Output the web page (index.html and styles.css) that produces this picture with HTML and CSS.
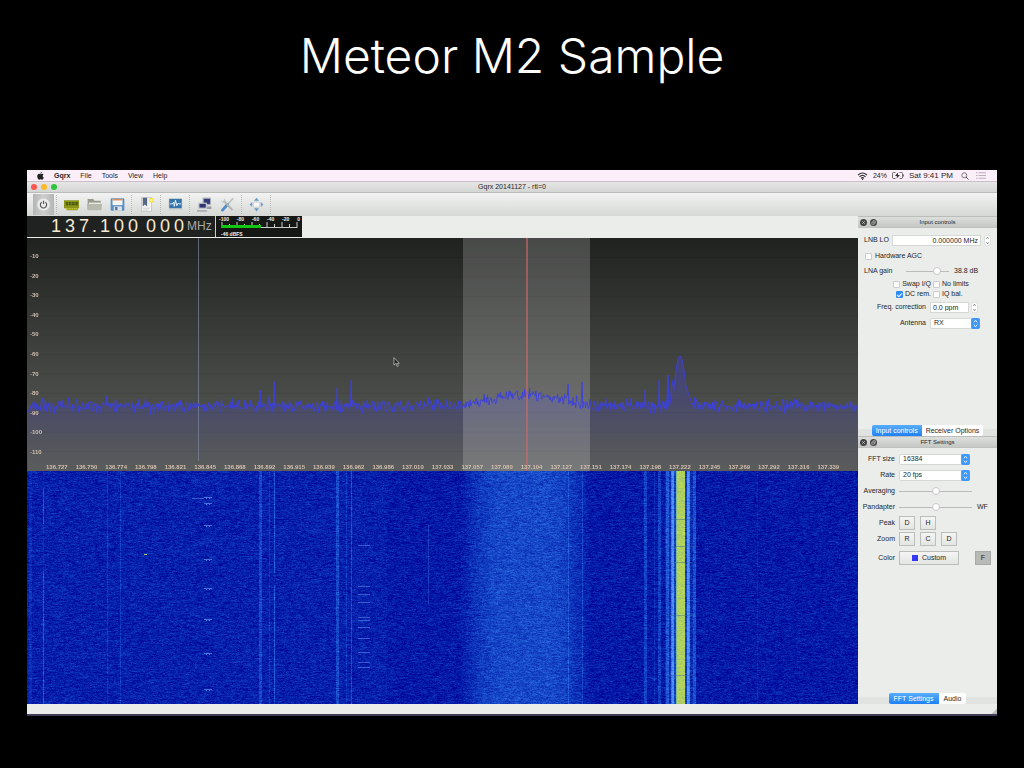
FILE: index.html
```html
<!DOCTYPE html>
<html lang="en">
<head>
<meta charset="utf-8">
<title>Meteor M2 Sample</title>
<link rel="stylesheet" href="styles.css">
</head>
<body>
<main class="slide">
  <h1 class="slide-title">Meteor M2 Sample</h1>
  <section class="window" aria-label="Gqrx">
    <nav class="menubar">
      <svg class="apple" viewBox="0 0 16 18"><path d="M11 0c0 2-1.500 3.800-3.300 3.800C7.500 2 9.200.200 11 0zM8 5c1 0 1.800-1 3.500-1 1.500 0 2.700.800 3.400 1.800-2.900 1.800-2.400 5.700.600 6.900-.8 2-2.200 4.800-4 4.800-1.200 0-1.700-.8-3.200-.8s-2 .8-3.200.8C2.800 17.500.500 13 .500 9.500.500 6 2.700 4 5 4c1.300 0 2.200 1 3 1z"/></svg>
      <a class="app-name" href="#">Gqrx</a><a href="#">File</a><a href="#">Tools</a><a href="#">View</a><a href="#">Help</a>
      <span class="menu-status">
        <svg class="wifi" viewBox="0 0 20 16"><g fill="none" stroke="#333" stroke-width="2.200"><path d="M1 6q9-8 18 0M4 9.500q6-5.500 12 0M7 12.500q3-2.500 6 0"/></g><circle cx="10" cy="14.500" r="1.500" fill="#333"/></svg>
        <span>24%</span>
        <svg class="battery" viewBox="0 0 24 14"><path d="M7 1H3Q1 1 1 3v8q0 2 2 2h4M15 1h4q2 0 2 2v8q0 2-2 2h-4M23 5v4" fill="none" stroke="#444" stroke-width="1.500"/><path d="M12 1 6 8h4l-1 5 7-7h-4z" fill="#333"/></svg>
        <span class="clock">Sat 9:41 PM</span>
        <svg class="search" viewBox="0 0 16 16"><circle cx="6.500" cy="6.500" r="5" fill="none" stroke="#555" stroke-width="1.500"/><path d="m10 10 5 5" stroke="#555" stroke-width="2"/></svg>
        <svg class="list" viewBox="0 0 20 14"><path d="M0 1.500h3M5 1.500h15M0 7h3M5 7h15M0 12.500h3M5 12.500h15" stroke="#bbb1ba" stroke-width="2"/></svg>
      </span>
    </nav>
    <header class="titlebar">
      <span class="lights"><i class="light red"></i><i class="light amber"></i><i class="light green"></i></span>
      <span>Gqrx 20141127 - rtl=0</span>
    </header>
    <div class="toolbar">
      <button class="tool power" aria-label="Power"><svg viewBox="0 0 24 24"><circle cx="12" cy="12" r="10.500" fill="#e9e9e8" stroke="#c3c5c3"/><path d="M9 8.500a5 5 0 1 0 6 0M12 6v5" fill="none" stroke="#555" stroke-width="1.800"/></svg></button>
      <i class="sep"></i>
      <button class="tool" aria-label="Hardware"><svg viewBox="0 0 24 24"><path d="M0 5h24v13h-2v3H4v-3H0z" fill="#8a9419"/><path d="M3 8h4v5H3zM8 8h4v5H8zM13 8h4v5h-4zM18 8h4v5h-4z" fill="#4d5610"/><path d="M4 19h17" stroke="#d3d33b" stroke-width="2" stroke-dasharray="2 1"/><path d="M3 10h18" stroke="#aab33b" stroke-dasharray="1 2"/></svg></button>
      <button class="tool" aria-label="Open"><svg viewBox="0 0 24 24"><path d="M1 3h9l2 3h10v14H1z" fill="#999b8e"/><path d="M3 9h19v3H3z" fill="#e9ebe5"/><path d="M0 11h24l-1 10H1z" fill="#b7b9ac"/></svg></button>
      <button class="tool" aria-label="Save"><svg viewBox="0 0 24 24"><rect x="1" y="2" width="22" height="20" rx="2" fill="#588fc5"/><path d="M4 3h16v10H4z" fill="#f4f4f1"/><path d="M4 3h16v2.500H4z" fill="#d78e5d"/><path d="M6 15h13v7H6z" fill="#e1e4e6"/><path d="M8 16h4v5H8z" fill="#527ca5"/></svg></button>
      <i class="sep"></i>
      <button class="tool" aria-label="Bookmarks"><svg viewBox="0 0 24 24"><path d="M4 1h16v22H4z" fill="#f3f3f1" stroke="#b5b8b8"/><path d="M6 1h7v14l-3.500-3L6 15z" fill="#526a85"/><path d="M6 18h11M6 21h9" stroke="#bdc4c9"/><circle cx="20" cy="5" r="4" fill="#f2e23b"/><circle cx="20" cy="5" r="2" fill="#fff89b"/></svg></button>
      <i class="sep"></i>
      <button class="tool" aria-label="Spectrum"><svg viewBox="0 0 24 24"><rect x="1" y="2" width="22" height="19" rx="2" fill="#d2d5d4"/><path d="M2 3h20v15H2z" fill="#3575ad"/><path d="M3 11h4l2-3 1 7 2-10 2 9 2-4 1 1h4" fill="none" stroke="#e6f4ff" stroke-width="1.600"/></svg></button>
      <i class="sep"></i>
      <button class="tool" aria-label="Remote control"><svg viewBox="0 0 24 24"><path d="M9 1h13v12H9z" fill="#a4a8b4"/><path d="M11 3h10v8H11z" fill="#353a79"/><path d="M2 9h14v10H2z" fill="#c2c4cb"/><path d="M4 11h10v6H4z" fill="#303477"/><path d="M0 21h15l2 2H0zM16 15h7v4h-7z" fill="#9a9ca6"/></svg></button>
      <button class="tool" aria-label="Settings"><svg viewBox="0 0 24 24"><path d="m21 2-9 10" stroke="#b9bfc0" stroke-width="2.500"/><path d="m12 12-8 9" stroke="#4f8dc5" stroke-width="4.500" stroke-linecap="round"/><path d="m6 6 14 15" stroke="#aeb4b5" stroke-width="3"/><path d="M2 3q-1 7 5 6 3-3 0-7l-1 4-3 1z" fill="#c0c5c5"/></svg></button>
      <i class="sep"></i>
      <button class="tool" aria-label="Full screen"><svg viewBox="0 0 24 24"><rect x="7" y="8" width="10" height="8" rx="1" fill="#f9faf9" stroke="#b4bbc0"/><path d="m12 1 4 5H8zM12 23l4-5H8zM1 12l4-4v8zM23 12l-4-4v8z" fill="#659bc9"/></svg></button>
      <i class="sep"></i>
    </div>
    <div class="workspace">
      <div class="receiver">
        <div class="readout">
          <div class="frequency"><span>1</span><span>3</span><span>7</span><span class="dot">.</span><span>1</span><span>0</span><span>0</span><span class="group">0</span><span>0</span><span>0</span><span class="unit">MHz</span></div>
          <div class="meter">
            <div class="meter-scale"><span>-100</span><span>-80</span><span>-60</span><span>-40</span><span>-20</span><span>0</span></div>
            <svg class="meter-bar" viewBox="0 0 77 7" preserveAspectRatio="none"><path d="M1 0v6M8.500 2v4M16 0v6M23.500 2v4M31 0v6M38.500 2v4M46 0v6M53.500 2v4M61 0v6M68.500 2v4M76 0v6M1 5.500h75" fill="none" stroke="#ccc"/><path d="M1 3h39v3H1z" fill="#15c515"/></svg>
            <span class="meter-value">-46 dBFS</span>
          </div>
        </div>
        <div class="plot">
          <canvas id="spectrum"></canvas>
          <div class="levels"><span>-10</span><span>-20</span><span>-30</span><span>-40</span><span>-50</span><span>-60</span><span>-70</span><span>-80</span><span>-90</span><span>-100</span><span>-110</span></div>
          <div class="freqs"><span>136.727</span><span>136.750</span><span>136.774</span><span>136.798</span><span>136.821</span><span>136.845</span><span>136.868</span><span>136.892</span><span>136.915</span><span>136.939</span><span>136.962</span><span>136.986</span><span>137.010</span><span>137.033</span><span>137.057</span><span>137.080</span><span>137.104</span><span>137.127</span><span>137.151</span><span>137.174</span><span>137.198</span><span>137.222</span><span>137.245</span><span>137.269</span><span>137.292</span><span>137.316</span><span>137.339</span></div>
          <svg class="pointer" viewBox="0 0 10 16"><path d="M1 1v12l3-3 2 5 2-1-2-4h3.500z" fill="#222" stroke="#ddd"/></svg>
        </div>
        <div class="waterfall"><canvas id="waterfall"></canvas></div>
      </div>
      <aside class="docks">
        <section class="dock dock-input">
          <h2 class="dock-title"><button class="dock-btn" aria-label="Close"><svg viewBox="0 0 14 14"><circle cx="7" cy="7" r="7"/><path d="m4 4 6 6m0-6-6 6"/></svg></button><button class="dock-btn" aria-label="Float"><svg viewBox="0 0 14 14"><circle cx="7" cy="7" r="7"/><path d="M3.500 6.500h5v4h-5zM6 6V3.500h4.500v5H9"/></svg></button><span>Input controls</span></h2>
          <div class="dock-body">
            <div class="row lnb"><label for="lnb">LNB LO</label><input id="lnb" type="text" value="0.000000 MHz"><svg class="stepper" viewBox="0 0 12 20"><use href="#step"/></svg></div>
            <div class="row agc"><input id="agc" type="checkbox"><label for="agc">Hardware AGC</label></div>
            <div class="row gain"><label for="gain">LNA gain</label><input id="gain" type="range" value="78"><output for="gain">38.8 dB</output></div>
            <div class="checks">
              <span><input id="swap" type="checkbox"><label for="swap">Swap I/Q</label></span><span><input id="nolim" type="checkbox"><label for="nolim">No limits</label></span>
              <span><input id="dc" type="checkbox" checked><label for="dc">DC rem.</label></span><span><input id="iq" type="checkbox"><label for="iq">IQ bal.</label></span>
            </div>
            <div class="row tune ppm"><label for="ppm">Freq. correction</label><input id="ppm" type="text" value="0.0 ppm"><svg class="stepper" viewBox="0 0 12 20"><use href="#step"/></svg></div>
            <div class="row tune antenna"><label for="ant">Antenna</label><span class="combo"><select id="ant"><option>RX</option></select><svg viewBox="0 0 16 20"><use href="#arrows"/></svg></span></div>
          </div>
          <div class="tabs"><button class="tab active">Input controls</button><button class="tab">Receiver Options</button></div>
        </section>
        <section class="dock dock-fft">
          <h2 class="dock-title"><button class="dock-btn" aria-label="Close"><svg viewBox="0 0 14 14"><circle cx="7" cy="7" r="7"/><path d="m4 4 6 6m0-6-6 6"/></svg></button><button class="dock-btn" aria-label="Float"><svg viewBox="0 0 14 14"><circle cx="7" cy="7" r="7"/><path d="M3.500 6.500h5v4h-5zM6 6V3.500h4.500v5H9"/></svg></button><span>FFT Settings</span></h2>
          <div class="dock-body">
            <div class="row field"><label for="fft">FFT size</label><span class="combo wide"><select id="fft"><option>16384</option></select><svg viewBox="0 0 16 20"><use href="#arrows"/></svg></span></div>
            <div class="row field"><label for="rate">Rate</label><span class="combo wide"><select id="rate"><option>20 fps</option></select><svg viewBox="0 0 16 20"><use href="#arrows"/></svg></span></div>
            <div class="row field"><label for="avg">Averaging</label><input id="avg" type="range" value="50"></div>
            <div class="row field"><label for="pan">Pandapter</label><input id="pan" type="range" value="50"><span>WF</span></div>
            <div class="row field"><span class="caption">Peak</span><button class="key">D</button><button class="key">H</button></div>
            <div class="row field"><span class="caption">Zoom</span><button class="key">R</button><button class="key">C</button><button class="key">D</button></div>
            <div class="row field color-row"><span class="caption">Color</span><button class="key custom"><i class="swatch"></i>Custom</button><button class="key pressed">F</button></div>
          </div>
          <div class="tabs"><button class="tab active">FFT Settings</button><button class="tab">Audio</button></div>
        </section>
      </aside>
    </div>
    <footer class="statusbar"><svg viewBox="0 0 10 10"><path d="M10 1v9H1z" fill="#bcbebc"/></svg></footer>
  </section>
</main>
<svg class="defs" aria-hidden="true">
  <defs>
    <g id="step"><rect x=".5" y=".5" width="11" height="19" rx="4" fill="#fff" stroke="#ccc"/><path d="m4 7 2-3 2 3M4 13l2 3 2-3" fill="none" stroke="#555" stroke-width="1.200"/></g>
    <g id="arrows"><rect width="16" height="20" rx="3" fill="#3f97f8"/><path d="m5 8 3-4 3 4M5 12l3 4 3-4" fill="none" stroke="#fff" stroke-width="1.500"/></g>
  </defs>
</svg>
<script src="plots.js"></script>
</body>
</html>
```

FILE: styles.css
```css
* { box-sizing: border-box; }
body { margin: 0; background: #000; font-family: "Liberation Sans", Arial, sans-serif; font-size: 7px; line-height: 8px; color: #262626; }
button, input, select { font: inherit; color: inherit; margin: 0; padding: 0; border: 0; border-radius: 0; background: none; }
svg { display: block; }
a { color: inherit; text-decoration: none; }
.defs { position: absolute; width: 0; height: 0; }
.slide { display: flex; flex-direction: column; min-height: 100vh; padding: 0 27px 52px; }
.slide-title { margin: 0; height: 170px; padding-top: 25px; text-align: center; color: #fff; font-family: Inter, "Liberation Sans", sans-serif; font-weight: 300; font-size: 48px; line-height: 62px; }
.window { flex: 1; display: flex; flex-direction: column; background: #ebedeb; border-bottom: 2px solid #443b58; }

.menubar { display: flex; align-items: center; gap: 10px; height: 12px; padding: 0 11px 0 10px; background: #fceffa; border-bottom: 1px solid #c9bfc8; }
.apple { width: 7px; height: 8px; fill: #222; }
.app-name { font-weight: 700; }
.menu-status { display: flex; align-items: center; gap: 5px; margin-left: auto; }
.wifi { width: 11px; height: 8px; }
.battery { width: 12px; height: 7px; }
.clock { font-size: 8px; padding-right: 3px; }
.search { width: 8px; height: 8px; }
.list { width: 10px; height: 7px; margin-left: 2px; }

.titlebar { display: grid; grid-template-columns: 1fr auto 1fr; align-items: center; height: 11px; padding: 0 4px; background: linear-gradient(#e5e6e5, #d4d6d4); border-bottom: 1px solid #babcba; }
.lights { display: flex; gap: 4px; }
.light { width: 6px; height: 6px; border-radius: 50%; }
.red { background: #fc5650; }
.amber { background: #fdb825; }
.green { background: #2bc43b; }

.toolbar { display: flex; align-items: center; height: 23px; padding-left: 6px; background: linear-gradient(#f2f3f2, #d5d8d5); }
.tool { display: grid; place-items: center; width: 23px; height: 21px; }
.tool svg { width: 15px; height: 15px; }
.power { width: 21px; background: linear-gradient(90deg, #b3b6b4, #cdcfcd, #b3b6b4); }
.sep { width: 1px; height: 19px; margin: 0 3px 0 2px; border-left: 1px dotted #b5b8b5; }

.workspace { flex: 1; display: flex; }
.receiver { flex: 1; min-width: 0; display: flex; flex-direction: column; }
.readout { display: flex; height: 22px; padding-bottom: 1px; }
.frequency { display: flex; align-items: center; width: 188px; padding-left: 22px; background: #1f2221; color: #f7e9cf; font-size: 18px; line-height: 21px; }
.frequency span { width: 14px; text-align: center; }
.frequency .dot { width: 7px; }
.frequency .group { margin-left: 4px; }
.frequency .unit { width: auto; margin-left: 1px; font-size: 12px; color: #a9aba9; }
.meter { width: 87px; padding: 0 2px 0 3px; background: #161816; border-left: 1px solid #ccc; color: #eee; font-size: 5px; line-height: 6px; font-weight: 700; }
.meter-scale { display: flex; justify-content: space-between; }
.meter-bar { width: 77px; height: 7px; margin-left: 2px; }
.meter-value { display: block; margin: 2px 0 0 2px; }
.plot { position: relative; flex: 1; display: flex; flex-direction: column; justify-content: space-between; min-height: 120px; color: #d3bfae; font-size: 6px; line-height: 7px; font-weight: 700; }
.plot canvas, .waterfall canvas { position: absolute; inset: 0; width: 100%; height: 100%; }
.levels { position: relative; flex: 1; display: flex; flex-direction: column; padding: 9px 0 2px 3px; }
.levels span { flex: 1; display: flex; align-items: center; }
.freqs { position: relative; display: flex; padding: 0 15px; }
.freqs span { flex: 1 1 0; min-width: 0; text-align: center; }
.pointer { position: absolute; left: 44%; top: 51%; width: 7px; height: 10px; }
.waterfall { position: relative; flex: 1; min-height: 120px; background: #0717a6; }

.docks { width: 139px; display: flex; flex-direction: column; }
.dock { display: flex; flex-direction: column; }
.dock-input { flex: 220 1 0; }
.dock-fft { flex: 268 1 0; }
.dock-title { display: flex; align-items: center; gap: 3px; height: 12px; margin: 0; padding: 0 2px; font-size: 6px; font-weight: 400; background: linear-gradient(#dddfdd, #c5c7c5); border-top: 1px solid #bbbdbb; border-bottom: 1px solid #bfc1bf; }
.dock-title > span { flex: 1; text-align: center; }
.dock-btn svg { width: 7px; height: 7px; fill: #444; stroke: #eee; stroke-width: 1; }
.dock-btn circle { stroke: none; }
.dock-body { flex: 1; padding: 3px 6px 0; }
.row { display: flex; align-items: center; }
input[type="text"] { min-width: 0; height: 11px; padding: 0 2px; background: #fff; border: 1px solid #d6d8d6; }
.stepper { width: 7px; height: 11px; }
input[type="checkbox"] { appearance: none; width: 7px; height: 7px; background: #fff; border: 1px solid #ccc; border-radius: 1px; flex: none; }
input[type="checkbox"]:checked { background: #2d8bf5; border-color: #2d8bf5; }
input[type="checkbox"]:checked::after { content: ""; display: block; width: 2px; height: 4px; margin-left: 1px; border: solid #fff; border-width: 0 1px 1px 0; transform: rotate(45deg); }
input[type="range"] { appearance: none; height: 10px; background: linear-gradient(#bbb, #bbb) center / 100% 1px no-repeat; }
input[type="range"]::-webkit-slider-thumb { appearance: none; width: 8px; height: 8px; border: 1px solid #c8c8c8; border-radius: 50%; background: #fff; }

.lnb { height: 18px; gap: 3px; }
.lnb input { flex: 1; text-align: right; }
.agc { height: 14px; gap: 3px; padding-left: 1px; }
.gain { height: 16px; }
.gain label { width: 42px; }
.gain input { width: 43px; }
.gain output { margin-left: 5px; }
.checks { display: grid; grid-template-columns: 67px auto; column-gap: 2px; }
.checks span { display: flex; align-items: center; gap: 2px; height: 10px; }
.checks span:nth-child(odd) { justify-content: flex-end; }
.tune { height: 16px; }
.tune label { width: 62px; margin-right: 4px; text-align: right; }
.ppm input { width: 39px; margin-right: 2px; }
.combo { display: flex; width: 50px; height: 11px; background: #fff; border: 1px solid #d6d8d6; border-radius: 2px; }
.combo select { flex: 1; min-width: 0; appearance: none; padding-left: 3px; }
.combo svg { width: 9px; height: 11px; margin: -1px -1px 0 0; }
.wide { width: 71px; }

.dock-fft .dock-body { padding: 3px 0 0; }
.field { height: 16px; }
.field > label, .caption { width: 37px; margin-right: 4px; text-align: right; }
.field > input { width: 73px; margin-right: 5px; }
.key { width: 16px; height: 14px; margin-right: 5px; border: 1px solid #bcbebc; background: linear-gradient(#f4f5f4, #e3e5e3); }
.color-row { height: 22px; }
.custom { display: flex; align-items: center; justify-content: center; gap: 4px; width: 60px; margin-right: 16px; }
.swatch { width: 6px; height: 6px; background: #3538ef; }
.pressed { background: #b8bab8; border-color: #a8aaa8; }
.tabs { display: flex; justify-content: center; height: 11px; background: linear-gradient(#ebedeb 40%, #e1e3e1 40%); }
.tab { height: 11px; padding: 0 5px; background: #fff; border-radius: 0 2px 2px 0; }
.tab.active { background: linear-gradient(#59adf9, #1e81f5); color: #fff; border-radius: 2px 0 0 2px; }
.dock-input .tab { padding: 0 4px; }
.statusbar { display: flex; justify-content: flex-end; align-items: flex-end; height: 10px; }
.statusbar svg { width: 6px; height: 6px; }
```

FILE: plots.js
```js
(function () {
  var seed = 20141127;
  function rnd() {
    seed = (seed * 1664525 + 1013904223) >>> 0;
    return seed / 4294967296;
  }
  function prepare(id) {
    var c = document.getElementById(id);
    c.width = c.clientWidth;
    c.height = c.clientHeight;
    return c;
  }
  // Both plots are modelled on an 831 x 233 grid.
  var GW = 831, GH = 233;

  function drawSpectrum() {
    var c = prepare("spectrum"), g = c.getContext("2d");
    g.scale(c.width / GW, c.height / GH);
    var bg = g.createLinearGradient(0, 0, 0, GH);
    bg.addColorStop(0, "#202220");
    bg.addColorStop(0.5, "#40423f");
    bg.addColorStop(1, "#5b5d5b");
    g.fillStyle = bg;
    g.fillRect(0, 0, GW, GH);
    g.fillStyle = "rgba(0,0,0,.06)";
    for (var k = 0; k < 11; k++) g.fillRect(0, 19 + k * 19.4, GW, 1);

    var spikes = [[15, 160], [80, 158], [233, 152], [242, 158], [247, 143], [310, 150], [324, 142],
      [401, 159], [541, 146], [555, 144], [618, 152], [632, 142], [641, 137], [668, 159]];
    var pts = [];
    for (var x = 0; x <= GW; x += 0.7) {
      var y = 168;
      if (x > 437 && x < 562) y -= 11 * Math.sin((x - 437) / 125 * Math.PI);
      y += (rnd() + rnd() + rnd() - 1.5) * 6;
      var d = Math.abs(x - 653);
      if (d >= 6 && d < 22) y -= rnd() * (22 - d) * 0.6;
      if (d < 8) y = Math.min(y, 118 + d * d * 0.9);
      if (Math.abs(x - 645.5) < 1.5) y = 142 + Math.abs(x - 645.5) * 8;
      if (x > 659 && x < 664) y = Math.min(y, 148 + (x - 659) * 3);
      spikes.forEach(function (s) { if (Math.abs(x - s[0]) < 0.5) y = s[1]; });
      pts.push([x, y]);
    }
    g.beginPath();
    g.moveTo(0, GH);
    pts.forEach(function (p) { g.lineTo(p[0], p[1]); });
    g.lineTo(GW, GH);
    var fill = g.createLinearGradient(0, 117, 0, GH);
    fill.addColorStop(0, "rgba(65,65,190,.5)");
    fill.addColorStop(0.45, "rgba(70,70,160,.35)");
    fill.addColorStop(1, "rgba(80,80,110,.05)");
    g.fillStyle = fill;
    g.fill();
    g.fillStyle = "rgba(255,255,255,.18)";
    g.fillRect(436, 0, 127, GH);
    g.fillStyle = "rgba(125,140,165,.65)";
    g.fillRect(171, 0, 1, 223);
    g.beginPath();
    pts.forEach(function (p) { g.lineTo(p[0], p[1]); });
    g.strokeStyle = "rgba(60,64,224,.9)";
    g.lineWidth = 1;
    g.stroke();
    g.fillStyle = "rgba(205,105,105,.6)";
    g.fillRect(499, 0, 2, GH);
    g.fillStyle = "#4848a5";
    g.fillRect(0, 167, 1, 66);
    g.fillRect(830, 167, 1, 66);
  }

  function drawWaterfall() {
    var c = prepare("waterfall"), g = c.getContext("2d");
    var w = c.width, h = c.height, img = g.createImageData(w, h), boost = [];
    // [x, half-width, strength]
    var lines = [[16, 1, 0.34], [3, 2, 0.1], [80, 1, 0.15], [93, 1, 0.18], [233, 1.2, 0.24], [242, 1, 0.16],
      [247, 1, 0.36], [310, 1.2, 0.27], [319, 1, 0.17], [324, 1, 0.28], [541, 1, 0.18], [555, 1, 0.2],
      [618, 1.2, 0.26], [627, 1, 0.14], [632, 1.2, 0.25], [640, 1.4, 0.26], [645, 1.7, 0.46], [661, 1.8, 0.5],
      [667, 1.2, 0.22], [730, 1, 0.08], [653, 9, 0.14], [653, 16, 0.12]];
    for (var x = 0; x < w; x++) {
      var gx = x * GW / w, b = 0.22;
      if (gx < 360) b += 0.04;
      var t = Math.abs(gx - 498) / 66;
      if (t < 1) b += 0.29 * Math.sin(Math.min(1, (1 - t) * 1.5) * Math.PI / 2);
      lines.forEach(function (l) {
        if (Math.abs(gx - l[0]) < l[1]) b += l[2];
      });
      boost.push(b);
    }
    for (var y = 0; y < h; y++) {
      var gy = y * GH / h, carry = 0;
      for (x = 0; x < w; x++) {
        gx = x * GW / w;
        carry = carry * 0.45 + (rnd() + rnd() - 1) * 0.17;
        var base = boost[x];
        if (Math.abs(gx - 16) < 1 && ((gy > 52 && gy < 100) || gy < 17)) base -= 0.26;
        if (Math.abs(gx - 247) < 1 && gy > 101 && gy < 115) base -= 0.3;
        var v = Math.max(0, Math.min(1, base + carry));
        var r = v * v * 85, gr = v * 160 - 10, bl = 142 + v * 112;
        if (Math.abs(gx - 653.3) < 4.6) {
          r = 175 + carry * 110; gr = 208 + carry * 80; bl = 95 - carry * 110;
          if (Math.abs(gx - 653.3) > 3.8) { r = 125; gr = 185; bl = 145; }
        }
        var i = (y * w + x) * 4;
        img.data[i] = r; img.data[i + 1] = gr; img.data[i + 2] = bl; img.data[i + 3] = 255;
      }
    }
    g.putImageData(img, 0, 0);
    g.scale(w / GW, h / GH);
    g.fillStyle = "rgba(110,160,240,.65)";
    [26, 32, 54, 88, 117, 148, 182, 218].forEach(function (y) {
      g.fillRect(177, y, 8, 1);
      g.fillRect(179, y + 1, 1, 1);
      g.fillRect(182, y + 1, 1, 1);
    });
    g.fillStyle = "rgba(80,130,230,.65)";
    g.fillRect(165, 27, 12, 1);
    [74, 115, 123, 131, 146, 149, 156, 167, 181, 191, 196].forEach(function (y) { g.fillRect(331, y, 12, 1); });
    g.fillStyle = "rgba(60,110,220,.4)";
    g.fillRect(401, 53, 1, 81);
    g.fillStyle = "#c0d060";
    g.fillRect(117, 83, 3, 1);
    g.fillStyle = "rgba(50,100,150,.4)";
    [48, 75, 91, 144, 204].forEach(function (y) { g.fillRect(641, y, 25, 1); });
  }

  function draw() {
    seed = 20141127;
    drawSpectrum();
    drawWaterfall();
  }
  draw();
  window.addEventListener("resize", draw);
})();
```
